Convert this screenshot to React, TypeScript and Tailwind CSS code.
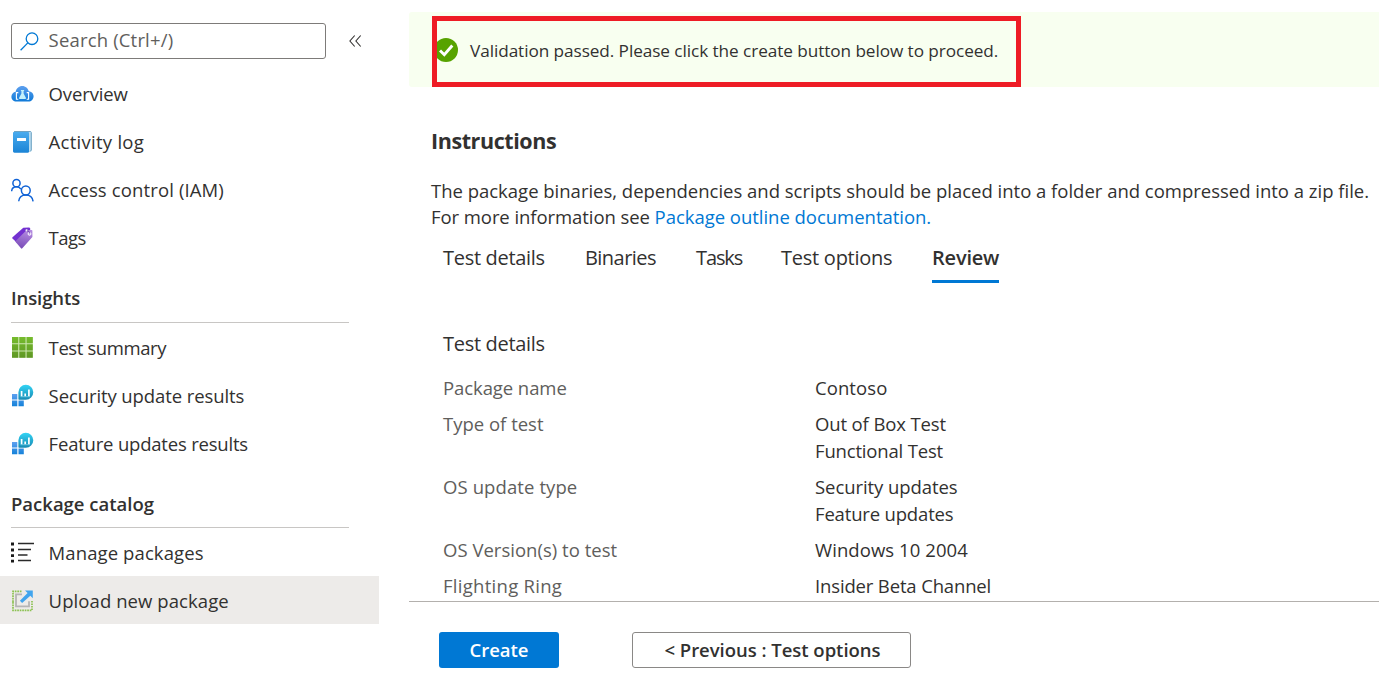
import type { ReactNode } from "react";

type Item = { label: string; icon: ReactNode; track: string; active?: boolean };

const OverviewIcon = () => (
  <svg width="23" height="23" viewBox="0 0 23 23">
    <defs>
      <linearGradient id="cloud" x1="0" y1="0" x2="0" y2="1">
        <stop offset="0" stopColor="#5ea0ef" />
        <stop offset="1" stopColor="#0f7ad8" />
      </linearGradient>
    </defs>
    <path d="M5.400 19.600C2.600 19.600 .4 17.500 .4 14.700C.4 12.200 2.200 10.100 4.700 9.700C5.100 6.400 7.900 3.900 11.300 3.900C14.500 3.900 17.100 6.200 17.700 9.200C20.500 9.400 22.600 11.600 22.600 14.300C22.600 17.200 20.300 19.600 17.500 19.600Z" fill="url(#cloud)" />
    <path d="M7.300 10.600H5.400v6.700h1.900M15.700 10.600h1.900v6.700h-1.900" fill="none" stroke="#fff" strokeWidth="1.100" />
    <path d="M9.900 8h3.200v.9h-.5v2.600l2.300 4.300c.3.6 0 1.100-.6 1.100H8.700c-.6 0-.9-.5-.6-1.100l2.300-4.300V8.900h-.5Z" fill="#c3f1fb" />
  </svg>
);

const LogIcon = () => (
  <svg width="23" height="23" viewBox="0 0 23 23">
    <defs>
      <linearGradient id="book" x1="0" y1="0" x2="0" y2="1">
        <stop offset="0" stopColor="#49abee" />
        <stop offset="1" stopColor="#1b84d6" />
      </linearGradient>
    </defs>
    <path d="M3.500 .9H19a1.700 1.700 0 0 1 1.700 1.700v17.600A2 2 0 0 1 19 22H5Z" fill="#b9dcf0" />
    <path d="M3 1.500H19.800M20.300 2.300v17.700l-1 1.300" fill="none" stroke="#5a94b8" strokeWidth=".8" />
    <path d="M2 3C2 2.300 2.500 2.100 3.200 2.100h13.600c.8 0 1.200.4 1.200 1.100v18.300c0 .8-.4 1.200-1.200 1.200H3.500C2.500 22.700 2 22.200 2 21.300Z" fill="url(#book)" />
    <rect x="6" y="8" width="9" height="3" rx=".3" fill="#fff" />
  </svg>
);

const PeopleIcon = () => (
  <svg width="23" height="24" viewBox="0 0 23 24" fill="none" stroke="#0f62d6" strokeWidth="1.500">
    <circle cx="5.500" cy="5.200" r="3.600" />
    <path d="M.6 13.200c.3-2.600 2.300-4.400 4.900-4.400 1.900 0 3.500.9 4.400 2.400" />
    <circle cx="14.800" cy="12.500" r="4.400" />
    <path d="M7.700 23.300c.3-3.800 3.200-6.400 7.100-6.400s6.900 2.600 7.300 6.400" />
  </svg>
);

const TagIcon = () => (
  <svg width="23" height="23" viewBox="0 0 23 23">
    <defs>
      <linearGradient id="tag" x1=".6" y1="0" x2=".4" y2="1">
        <stop offset="0" stopColor="#b48be0" />
        <stop offset="1" stopColor="#7a4cb8" />
      </linearGradient>
    </defs>
    <path d="M12.300 1.700 18 1.500a1 1 0 0 1 1 .8l.8 5.400-13.600 9.200-4.700-4.500a.9.900 0 0 1 0-1.200Z" fill="#7331d0" />
    <path d="M15.700 3.900h4.800a.9.900 0 0 1 .9.900v6.300L11.300 22.300a.9.900 0 0 1-1.300 0L4.200 15.500Z" fill="url(#tag)" />
    <circle cx="15.600" cy="4.300" r="1.100" fill="#fff" />
    <circle cx="18.500" cy="7.900" r="1.400" fill="#c9a9ea" stroke="#fff" strokeWidth=".9" />
    <path d="M15.800 5c1.800-.5 3 .8 2.800 2.200" fill="none" stroke="#552f99" strokeWidth=".8" />
  </svg>
);

const GridIcon = () => (
  <svg width="23" height="23" viewBox="0 0 23 23">
    <defs>
      <linearGradient id="cells" x1="0" y1="1" x2="0" y2="22" gradientUnits="userSpaceOnUse">
        <stop offset="0" stopColor="#76bc2d" />
        <stop offset="1" stopColor="#5e9624" />
      </linearGradient>
    </defs>
    <path d="M1 1h20.800v20.800H1Z" fill="#cbe6ae" />
    <path d="M1 1h6.200v6.200H1ZM8.300 1h6.200v6.200H8.300ZM15.600 1h6.200v6.200h-6.200ZM1 8.300h6.200v6.200H1ZM8.300 8.300h6.200v6.200H8.300ZM15.600 8.300h6.200v6.200h-6.200ZM1 15.600h6.200v6.200H1ZM8.300 15.600h6.200v6.200H8.300ZM15.600 15.600h6.200v6.200h-6.200Z" fill="url(#cells)" />
  </svg>
);

const ResultsIcon = () => (
  <svg width="23" height="23" viewBox="0 0 23 23">
    <defs>
      <linearGradient id="bubble" x1="0" y1="0" x2="0" y2="1">
        <stop offset="0" stopColor="#32d4f5" />
        <stop offset="1" stopColor="#198ab3" />
      </linearGradient>
      <linearGradient id="blocks" x1="0" y1="10" x2="0" y2="23" gradientUnits="userSpaceOnUse">
        <stop offset="0" stopColor="#5ea0ef" />
        <stop offset="1" stopColor="#1080d8" />
      </linearGradient>
    </defs>
    <path d="M1 10h5.300v5.600H1ZM1 16.600h5.300v5.700H1ZM7.500 16.600h5.300v5.700H7.500Z" fill="url(#blocks)" />
    <path d="M14.800.7a7.500 7.500 0 1 1 0 15H8a.6.6 0 0 1-.6-.6V8.200A7.500 7.500 0 0 1 14.800.7Z" fill="url(#bubble)" />
    <path d="M10.600 7v5.200M14.200 9.400v2.800M17.900 5.400v6.800" stroke="#fff" strokeWidth="1.700" />
    <path d="M9.500 12.700h9.500" stroke="#9fe3f2" strokeWidth=".6" />
  </svg>
);

const ListIcon = () => (
  <svg width="23" height="23" viewBox="0 0 23 23">
    <path d="M0 1.500h3v3H0ZM0 7.500h3v3H0ZM0 13.300h3v2.800H0ZM0 18.800h3v2.800H0Z" fill="#1b1b1b" />
    <path d="M7 2.500h16M7 8.500h13M7 14h9.500M7 19.500h13" stroke="#2a2a2a" strokeWidth="1.300" />
  </svg>
);

const UploadIcon = () => (
  <svg width="23" height="23" viewBox="0 0 23 23">
    <path d="M2 13V2.300h9M2 13v8.300h19V11.800" fill="none" stroke="#8cc152" strokeWidth="1.700" strokeDasharray="1.700 .8" />
    <path d="M11 5.300H5v12h13v-5" fill="none" stroke="#b5b5b5" strokeWidth="1.800" />
    <path d="M14 1.500h7.800v7.800l-2.500-2.500-8.200 7.300-2.200-2.300 7.700-7.700Z" fill="#41a5ee" />
  </svg>
);

const top: Item[] = [
  { label: "Overview", icon: <OverviewIcon />, track: "tracking-[-0.13px]" },
  { label: "Activity log", icon: <LogIcon />, track: "tracking-[0.27px]" },
  { label: "Access control (IAM)", icon: <PeopleIcon />, track: "tracking-[0.13px]" },
  { label: "Tags", icon: <TagIcon />, track: "tracking-[-0.5px]" },
];
const insights: Item[] = [
  { label: "Test summary", icon: <GridIcon />, track: "tracking-[-0.4px]" },
  { label: "Security update results", icon: <ResultsIcon />, track: "tracking-[-0.1px]" },
  { label: "Feature updates results", icon: <ResultsIcon />, track: "tracking-[-0.2px]" },
];
const catalog: Item[] = [
  { label: "Manage packages", icon: <ListIcon />, track: "tracking-[0.1px]" },
  { label: "Upload new package", icon: <UploadIcon />, track: "tracking-[0.08px]", active: true },
];

const NavList = ({ items, inset = "pb-px" }: { items: Item[]; inset?: string }) => (
  <ul>
    {items.map((i) => (
      <li key={i.label} className={`flex h-12 items-center gap-[14.6px] pl-[11px] ${inset} ${i.active ? "bg-[#edebe9]" : ""}`}>
        <span className="shrink-0">{i.icon}</span>
        <span className={i.track}>{i.label}</span>
      </li>
    ))}
  </ul>
);

const tabs = [
  { label: "Test details", box: "w-[102px] mr-[40px]", track: "tracking-[-0.3px]" },
  { label: "Binaries", box: "w-[71px] mr-[40px]", track: "tracking-[-0.55px]" },
  { label: "Tasks", box: "w-[47px] mr-[38px]", track: "tracking-[-1.1px]" },
  { label: "Test options", box: "w-[111px] mr-[40px]", track: "tracking-[-0.25px]" },
];

const rows = [
  { name: "Package name", track: "tracking-[-0.08px]", values: [{ t: "Contoso", track: "tracking-[0.08px]" }] },
  { name: "Type of test", track: "tracking-[0px]", values: [{ t: "Out of Box Test", track: "tracking-[-0.13px]" }, { t: "Functional Test", track: "tracking-[-0.17px]" }] },
  { name: "OS update type", track: "tracking-[0.1px]", values: [{ t: "Security updates", track: "tracking-[-0.07px]" }, { t: "Feature updates", track: "tracking-[-0.17px]" }] },
  { name: "OS Version(s) to test", track: "tracking-[0.02px]", values: [{ t: "Windows 10 2004", track: "tracking-[0.07px]" }] },
  { name: "Flighting Ring", track: "tracking-[0.28px]", values: [{ t: "Insider Beta Channel", track: "tracking-[-0.15px]" }] },
];

export default function App() {
  return (
    <div className="flex h-[685px] w-[1379px] overflow-hidden whitespace-nowrap bg-white font-['Open_Sans',sans-serif] text-[18.5px] leading-[27px] text-[#323130]">
      <aside className="w-[379px] shrink-0 pt-[23px]">
        <div className="flex items-center pl-[11px]">
          <div className="flex h-9 w-[315px] items-center rounded-[3px] border border-[#7d7b79] pl-[8px] text-[#605e5c]">
            <svg width="19" height="19" viewBox="0 0 19 19" fill="none" stroke="#0078d4" strokeWidth="1.300">
              <circle cx="12" cy="6.700" r="5.800" />
              <path d="M7.800 10.900.6 18.200" />
            </svg>
            <span className="ml-[9.6px] pb-[3px] tracking-[0.17px]">Search (Ctrl+/)</span>
          </div>
          <svg className="ml-[23px]" width="13" height="12" viewBox="0 0 13 12" fill="none" stroke="#323130" strokeWidth="1.100">
            <path d="M5.700.5.900 6l4.800 5.500M11.700.5 6.900 6l4.800 5.500" />
          </svg>
        </div>
        <nav className="pt-[11px]">
          <NavList items={top} />
          <h3 className="ml-[11px] mr-[30px] h-[61px] border-b border-[#c8c6c4] pt-[22px] font-semibold tracking-[-0.1px]">Insights</h3>
          <div className="pt-px">
            <NavList items={insights} />
          </div>
          <h3 className="ml-[11px] mr-[30px] h-[60px] border-b border-[#c8c6c4] pt-[22px] font-semibold tracking-[0px]">Package catalog</h3>
          <NavList items={catalog} inset="pt-px" />
        </nav>
      </aside>
      <main className="ml-[30px] flex w-[970px] flex-col pt-3">
        <div className="relative flex h-[75px] shrink-0 items-start rounded-l-[3px] bg-[#f8fff0] pl-[25px] pt-[25px]">
          <svg className="mt-px" width="24" height="24" viewBox="0 0 24 24">
            <circle cx="12" cy="12" r="12" fill="#57a300" />
            <path d="m6 12.500 4.300 4.200 8-9.200" fill="none" stroke="#fff" strokeWidth="2.900" />
          </svg>
          <span className="ml-3 text-[17.2px] tracking-[-0.07px]">Validation passed. Please click the create button below to proceed.</span>
          <div className="absolute left-[23px] top-1 h-[71px] w-[589px] border-5 border-[#ee1c25]" />
        </div>
        <section className="flex h-[514px] shrink-0 flex-col pl-[22px] pt-[40px]">
          <h2 className="h-[51px] text-[21.5px] font-bold leading-[28px] tracking-[-0.42px]">Instructions</h2>
          <p className="leading-[26px]">
            <span className="tracking-[-0.01px]">The package binaries, dependencies and scripts should be placed into a folder and compressed into a zip file.</span>
            <br />
            <span className="tracking-[-0.07px]">For more information see </span>
            <a className="tracking-[-0.03px] text-[#0078d4]">Package outline documentation.</a>
          </p>
          <div className="ml-3 mt-[14px] flex h-[39px] text-[20px]">
            {tabs.map((t) => (
              <span key={t.label} className={`${t.box} ${t.track}`}>{t.label}</span>
            ))}
            <span className="w-[67px] border-b-3 border-[#0078d4] font-semibold tracking-[-0.2px]">Review</span>
          </div>
          <h3 className="ml-3 mt-[47px] text-[20px] tracking-[-0.3px]">Test details</h3>
          <dl className="ml-3 mt-[17px] flex flex-col gap-[9px]">
            {rows.map((r) => (
              <div key={r.name} className="flex">
                <dt className={`w-[372px] text-[#605e5c] ${r.track}`}>{r.name}</dt>
                <dd className="flex flex-col">
                  {r.values.map((v) => (
                    <span key={v.t} className={v.track}>{v.t}</span>
                  ))}
                </dd>
              </div>
            ))}
          </dl>
        </section>
        <footer className="flex grow items-start border-t border-[#b3b0ad] pl-[30px] pt-[30px] font-semibold">
          <button className="h-9 w-[120px] rounded-[3px] bg-[#0078d4] pb-[2px] tracking-[0px] text-white">Create</button>
          <button className="ml-[73px] h-9 w-[279px] rounded-[3px] border border-[#8a8886] pb-[2px] pl-[2px] tracking-[-0.03px]">&lt; Previous : Test options</button>
        </footer>
      </main>
    </div>
  );
}
